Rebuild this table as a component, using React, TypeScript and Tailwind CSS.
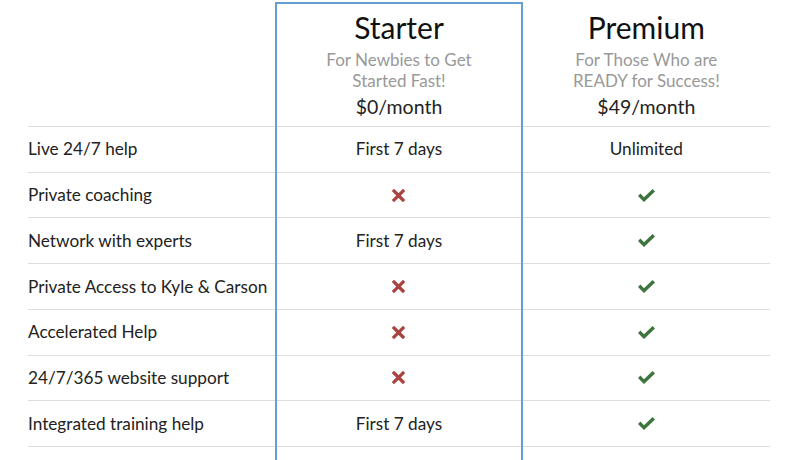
import React from "react";

type Cell = string | "yes" | "no";

const rows: { label: string; starter: Cell; premium: Cell }[] = [
  { label: "Live 24/7 help", starter: "First 7 days", premium: "Unlimited" },
  { label: "Private coaching", starter: "no", premium: "yes" },
  { label: "Network with experts", starter: "First 7 days", premium: "yes" },
  { label: "Private Access to Kyle & Carson", starter: "no", premium: "yes" },
  { label: "Accelerated Help", starter: "no", premium: "yes" },
  { label: "24/7/365 website support", starter: "no", premium: "yes" },
  { label: "Integrated training help", starter: "First 7 days", premium: "yes" },
];

function Check() {
  return (
    <svg width="17" height="13" viewBox="0 0 17 13" aria-hidden="true">
      <polygon points="0,7 2.4,4.6 6,8.2 14.6,0 17,2.4 6,13" fill="#3c763d" />
    </svg>
  );
}

function Cross() {
  return (
    <svg width="13" height="13" viewBox="0 0 13 13" aria-hidden="true">
      <path d="M2 2 L11 11 M11 2 L2 11" stroke="#a94442" strokeWidth="3.2" strokeLinecap="square" />
    </svg>
  );
}

function Value({ v }: { v: Cell }) {
  if (v === "yes") return <Check />;
  if (v === "no") return <Cross />;
  return <span>{v}</span>;
}

function Row({ children, className = "" }: { children?: React.ReactNode; className?: string }) {
  return (
    <div className={`h-[45.71px] border-t border-[#dddddd] flex items-center ${className}`}>{children}</div>
  );
}

function Header({ title, sub1, sub2, price }: { title: string; sub1: string; sub2: string; price: string }) {
  return (
    <div className="h-[122px] flex flex-col items-center pt-[5px]">
      <div className="text-[30px] leading-[36px] text-[#111]">{title}</div>
      <div className="text-[17px] leading-[21px] text-[#999] mt-[4px] text-center">
        {sub1}
        <br />
        {sub2}
      </div>
      <div className="text-[19.5px] leading-[26px] text-[#222] mt-[3px]">{price}</div>
    </div>
  );
}

export default function App() {
  return (
    <div
      className="w-[800px] h-[460px] overflow-hidden bg-white text-[#222] text-[17.2px]"
      style={{ fontFamily: "Lato, 'Noto Sans', sans-serif" }}
    >
      <div className="ml-[28px] w-[742px] pt-[2px] grid grid-cols-3">
        <div className="border-t-2 border-transparent">
          <div className="h-[122px]" />
          {rows.map((r) => (
            <Row key={r.label}>{r.label}</Row>
          ))}
          <Row className="h-[60px]" />
        </div>
        <div className="border-2 border-[#659ed6]">
          <Header title="Starter" sub1="For Newbies to Get" sub2="Started Fast!" price="$0/month" />
          {rows.map((r) => (
            <Row key={r.label} className="justify-center">
              <Value v={r.starter} />
            </Row>
          ))}
          <Row className="h-[60px]" />
        </div>
        <div className="border-t-2 border-transparent">
          <Header title="Premium" sub1="For Those Who are" sub2="READY for Success!" price="$49/month" />
          {rows.map((r) => (
            <Row key={r.label} className="justify-center">
              <Value v={r.premium} />
            </Row>
          ))}
          <Row className="h-[60px]" />
        </div>
      </div>
    </div>
  );
}
